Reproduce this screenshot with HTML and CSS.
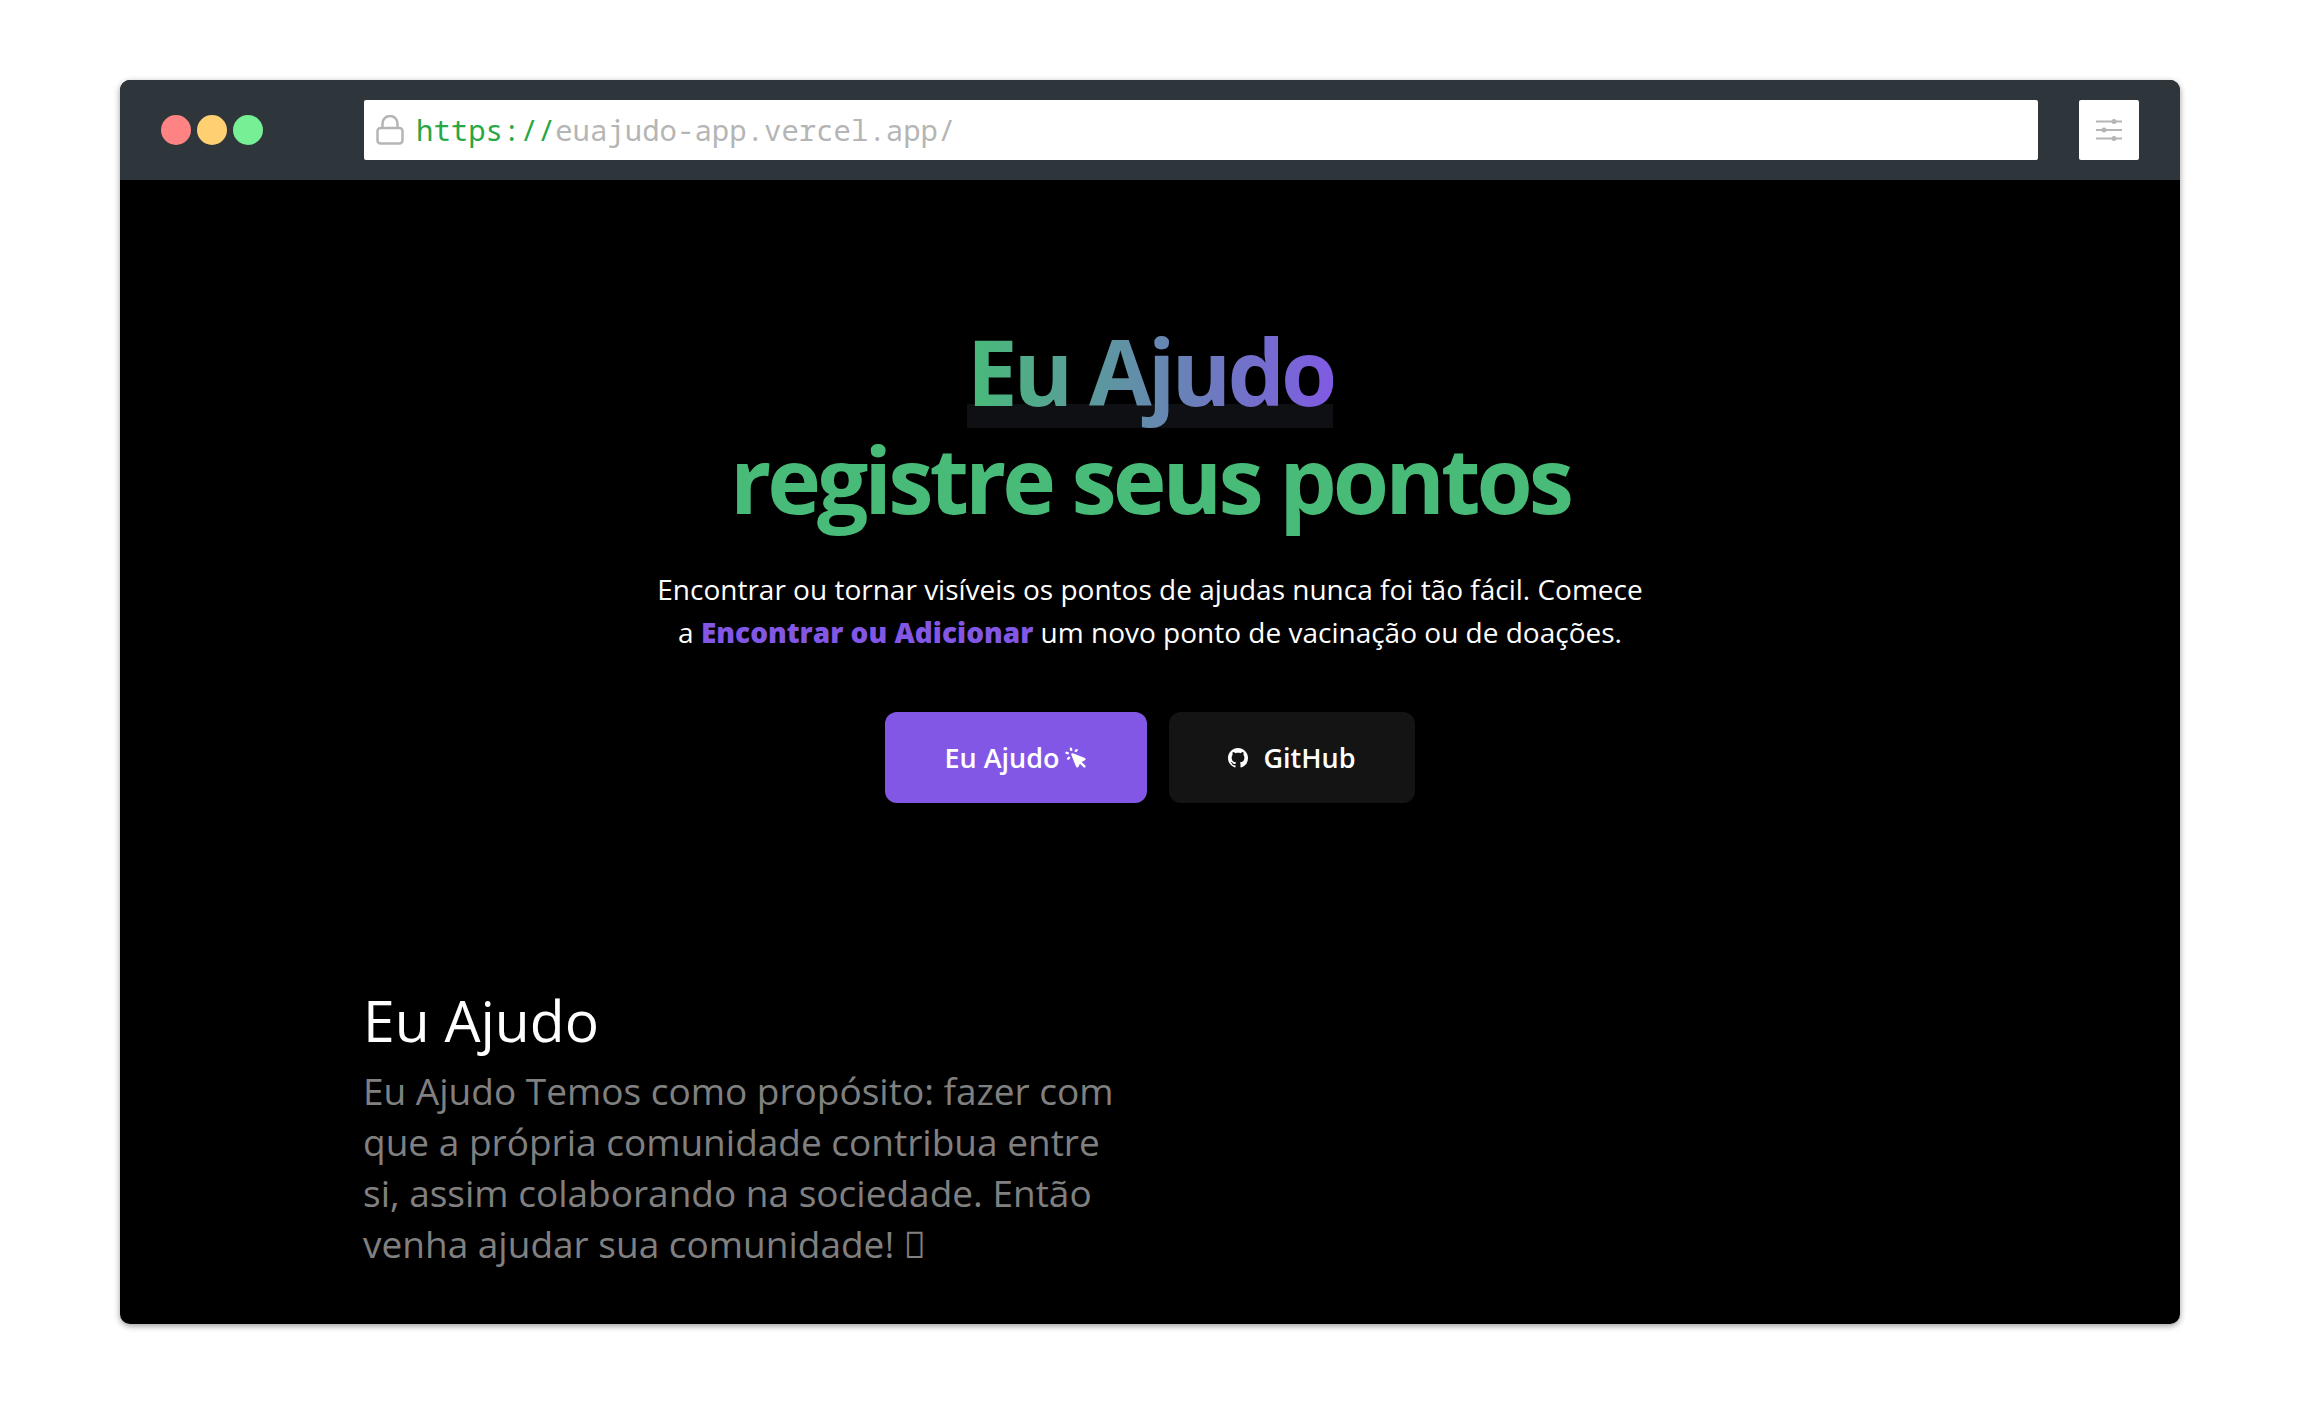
FILE: index.html
```html
<!DOCTYPE html>
<html lang="pt-BR">
<head>
  <meta charset="utf-8">
  <meta name="viewport" content="width=device-width, initial-scale=1">
  <title>Eu Ajudo</title>
  <link rel="stylesheet" href="styles.css">
</head>
<body>
  <div class="window">
    <header class="toolbar">
      <div class="dots">
        <span class="dot dot-red"></span>
        <span class="dot dot-yellow"></span>
        <span class="dot dot-green"></span>
      </div>
      <div class="address">
        <svg class="lock" viewBox="0 0 28 30" fill="none" stroke="currentColor" stroke-width="2.500" aria-hidden="true">
          <rect x="1.500" y="13" width="25" height="15.500" rx="3"/>
          <path d="M6.500 13V8.500a7.500 7.500 0 0 1 15 0V13"/>
        </svg>
        <label class="scheme" for="url">https://</label>
        <input class="url" id="url" type="text" value="euajudo-app.vercel.app/">
      </div>
      <button class="settings" type="button" aria-label="Configurações">
        <svg viewBox="0 0 26 22" width="26" height="22" aria-hidden="true">
          <path d="M0 2.500h26M0 11h26M0 19.500h26" stroke="currentColor" stroke-width="2"/>
          <g fill="currentColor"><circle cx="18" cy="2.500" r="2.500"/><circle cx="8" cy="11" r="2.500"/><circle cx="18" cy="19.500" r="2.500"/></g>
        </svg>
      </button>
    </header>
    <main class="page">
      <section class="hero">
        <h1 class="headline"><span class="brand"><span class="brand-text">Eu Ajudo</span></span><br>registre seus pontos</h1>
        <p class="lead">Encontrar ou tornar visíveis os pontos de ajudas nunca foi tão fácil. Comece a <strong>Encontrar ou Adicionar</strong> um novo ponto de vacinação ou de doações.</p>
        <div class="actions">
          <a class="action action-primary" href="#sobre">Eu Ajudo
            <svg class="cursor" viewBox="0 0 20 20" fill="currentColor" aria-hidden="true"><path fill-rule="evenodd" d="M6.672 1.911a1 1 0 10-1.932.518l.259.966a1 1 0 001.932-.518l-.26-.966zM2.429 4.740a1 1 0 10-.517 1.932l.966.259a1 1 0 00.517-1.932l-.966-.26zm8.814-.569a1 1 0 00-1.415-1.414l-.707.707a1 1 0 101.415 1.415l.707-.708zm-7.071 7.072l.707-.707A1 1 0 003.465 9.120l-.708.707a1 1 0 001.415 1.415zm3.200-5.171a1 1 0 00-1.300 1.300l4 10a1 1 0 001.823.075l1.380-2.759 3.018 3.020a1 1 0 001.414-1.415l-3.019-3.020 2.760-1.379a1 1 0 00-.076-1.822l-10-4z"/></svg>
          </a>
          <a class="action action-dark" href="#github">
            <svg class="github" viewBox="0 0 16 16" fill="currentColor" aria-hidden="true"><path d="M8 0C3.580 0 0 3.580 0 8c0 3.540 2.290 6.530 5.470 7.590.4.070.55-.17.55-.38 0-.19-.01-.82-.01-1.490-2.010.37-2.530-.49-2.690-.94-.09-.23-.48-.94-.82-1.130-.28-.15-.68-.52-.01-.53.63-.01 1.080.58 1.230.82.72 1.210 1.870.87 2.330.66.070-.52.28-.87.51-1.070-1.780-.2-3.640-.89-3.640-3.950 0-.87.31-1.590.82-2.150-.08-.2-.36-1.020.08-2.120 0 0 .67-.21 2.200.82.64-.18 1.320-.27 2-.27s1.360.09 2 .27c1.530-1.040 2.200-.82 2.200-.82.44 1.100.16 1.920.08 2.120.51.56.82 1.270.82 2.150 0 3.070-1.870 3.750-3.650 3.950.29.25.54.73.54 1.480 0 1.070-.01 1.930-.01 2.200 0 .21.15.46.55.38A8.010 8.010 0 0016 8c0-4.420-3.580-8-8-8z"/></svg>
            GitHub
          </a>
        </div>
      </section>
      <section class="about" id="sobre">
        <div class="about-text">
          <h2 class="about-title">Eu Ajudo</h2>
          <p class="about-copy">Eu Ajudo Temos como propósito: fazer com que a própria comunidade contribua entre si, assim colaborando na sociedade. Então venha ajudar sua comunidade! <span class="symbol">&#xE900;</span></p>
        </div>
      </section>
    </main>
  </div>
</body>
</html>
```
FILE: styles.css
```css
* {
  box-sizing: border-box;
}

body {
  margin: 0;
  padding: 80px 120px;
  background: #fff;
  color: #fff;
  font-family: "Open Sans", "Noto Sans", sans-serif;
}

h1,
h2,
p {
  margin: 0;
}

.window {
  overflow: hidden;
  border-radius: 10px;
  background: #000;
  box-shadow: 0 2px 6px rgba(0, 0, 0, 0.4);
}

/* Browser toolbar */
.toolbar {
  display: flex;
  align-items: center;
  padding: 20px 41px;
  background: #2e363c;
}

.dots {
  display: flex;
  gap: 6px;
  margin-right: 101px;
}

.dot {
  width: 30px;
  height: 30px;
  border-radius: 50%;
}

.dot-red { background: #ff8383; }
.dot-yellow { background: #ffd072; }
.dot-green { background: #77ef95; }

.address {
  display: flex;
  flex: 1;
  align-items: center;
  height: 60px;
  margin-right: 41px;
  padding: 0 12px;
  border-radius: 2px;
  background: #fff;
  color: #b5b5b5;
  font-family: Consolas, "Noto Sans Mono", "DejaVu Sans Mono", monospace;
  font-size: 29px;
}

.lock {
  width: 28px;
  height: 30px;
  margin-right: 12px;
}

.scheme {
  padding-bottom: 2px;
  color: #28a745;
}

.url {
  flex: 1;
  padding: 0 0 2px;
  border: 0;
  outline: 0;
  background: none;
  color: inherit;
  font: inherit;
}

.settings {
  display: flex;
  align-items: center;
  justify-content: center;
  width: 60px;
  height: 60px;
  padding: 0;
  border: 0;
  border-radius: 2px;
  background: #fff;
  color: #b5b5b5;
}

/* Hero */
.hero {
  display: flex;
  flex-direction: column;
  align-items: center;
  padding: 137px 24px 183px;
  text-align: center;
}

.headline {
  color: #48bb78;
  font-size: 91px;
  font-weight: 700;
  line-height: 108px;
  letter-spacing: -4px;
}

.brand {
  display: inline-block;
  margin-bottom: -3px;
  padding-bottom: 3px;
  background: linear-gradient(#0f1014, #0f1014) 0 100% / 100% 24px no-repeat;
}

.brand-text {
  background: linear-gradient(to right, #48bb78, #805ae3);
  -webkit-background-clip: text;
  background-clip: text;
  color: transparent;
}

.lead {
  max-width: 1004px;
  margin-top: 35px;
  font-size: 28px;
  line-height: 43px;
}

.lead strong {
  color: #8257e5;
  font-weight: 800;
}

.actions {
  display: flex;
  gap: 22px;
  margin-top: 58px;
}

.action {
  display: flex;
  align-items: center;
  height: 91px;
  padding: 0 59px;
  border-radius: 12px;
  color: #fff;
  font-size: 27px;
  font-weight: 600;
  text-decoration: none;
}

.action-primary {
  background: #8257e5;
}

.action-dark {
  background: #141414;
}

.cursor {
  width: 24px;
  height: 24px;
  margin-left: 4px;
}

.github {
  width: 20px;
  height: 20px;
  margin-right: 16px;
}

/* About */
.about {
  display: grid;
  grid-template-columns: 1fr 1fr;
  max-width: 1622px;
  margin: 0 auto;
  padding: 0 24px 55px;
}

.about-text {
  padding-right: 20px;
}

.about-title {
  font-size: 57px;
  font-weight: 400;
  line-height: 68px;
}

.about-copy {
  margin-top: 11px;
  color: #808080;
  font-size: 37px;
  line-height: 51px;
}

.symbol {
  font-family: "Noto Sans", sans-serif;
}
```
